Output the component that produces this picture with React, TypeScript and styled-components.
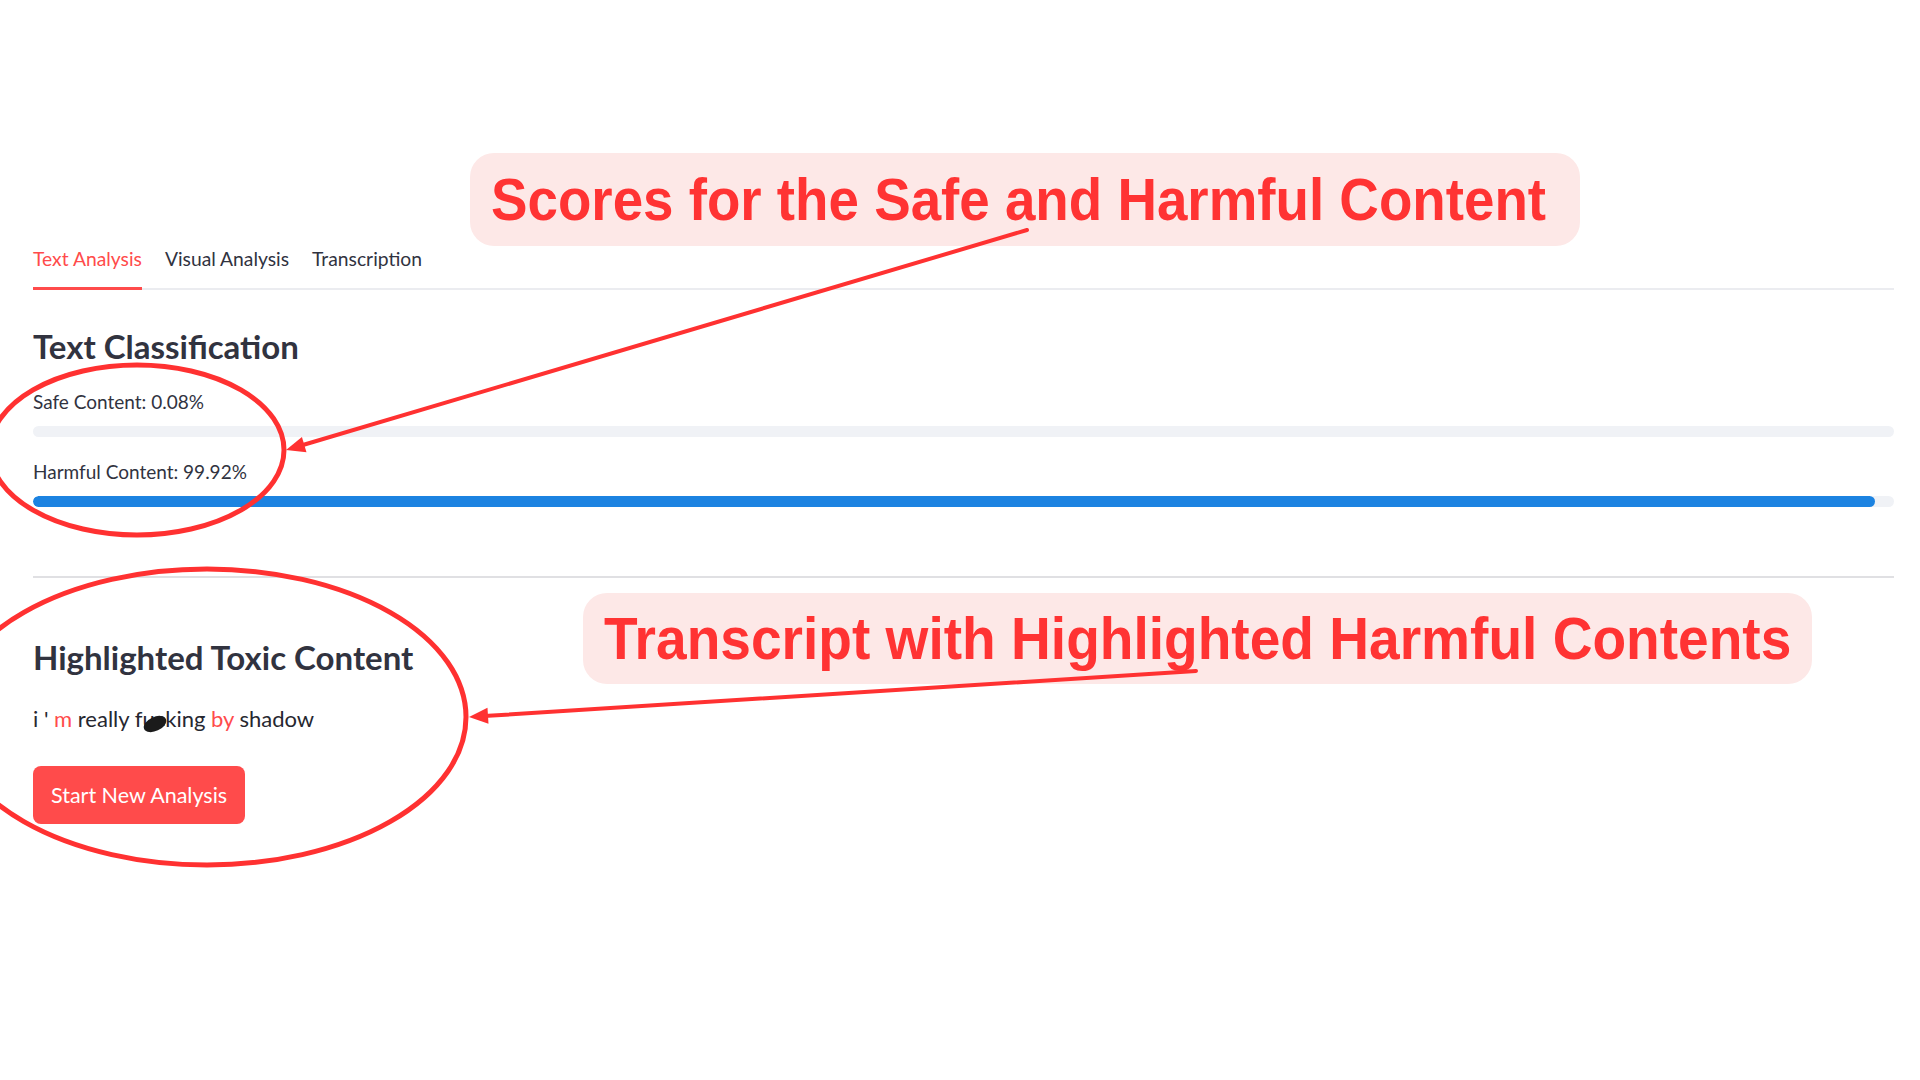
import React from "react";
import styled, { createGlobalStyle } from "styled-components";

const GlobalStyle = createGlobalStyle`
  html, body { margin: 0; padding: 0; background: #ffffff; }
  body {
    font-family: Lato, "Liberation Sans", sans-serif;
    color: #31333f;
  }
  * { box-sizing: border-box; }
`;

const Page = styled.div`
  position: relative;
  width: 1920px;
  height: 1080px;
  overflow: hidden;
  background: #ffffff;
`;

const Main = styled.main`
  display: flex;
  flex-direction: column;
  align-items: stretch;
  padding: 246px 26px 0 33px;
`;

const TabList = styled.div`
  display: flex;
  gap: 23px;
  border-bottom: 2px solid #ebecf0;
`;

const Tab = styled.div<{ $active?: boolean }>`
  font-size: 19.3px;
  line-height: 24px;
  padding-top: 1px;
  padding-bottom: 16px;
  margin-bottom: -2px;
  border-bottom: 3px solid ${(p) => (p.$active ? "#ff4b4b" : "transparent")};
  color: ${(p) => (p.$active ? "#ff4b4b" : "#31333f")};
  white-space: nowrap;
`;

const Heading = styled.h3<{ $gap: number }>`
  margin: ${(p) => p.$gap}px 0 0;
  font-size: 33px;
  line-height: 40px;
  font-weight: 700;
  color: #31333f;
`;

const Label = styled.div<{ $gap: number }>`
  margin-top: ${(p) => p.$gap}px;
  font-size: 19px;
  line-height: 24px;
  color: #31333f;
`;

const Track = styled.div`
  margin-top: 12px;
  height: 11px;
  border-radius: 6px;
  background: #f0f2f6;
  overflow: hidden;
`;

const Fill = styled.div`
  height: 100%;
  border-radius: 6px;
  background: #1c83e1;
`;

const Divider = styled.hr`
  margin: 69px 0 0;
  border: none;
  height: 2px;
  background: #e0e0e3;
`;

const Transcript = styled.p`
  margin: 27px 0 0;
  font-size: 22px;
  line-height: 30px;
  color: #262730;
`;

const Toxic = styled.span`
  color: #ff4b4b;
`;

const Censored = styled.span`
  position: relative;
  &::after {
    content: "";
    position: absolute;
    left: 1px;
    top: 12px;
    width: 24px;
    height: 14px;
    border-radius: 50%;
    background: #1b1b1b;
    transform: rotate(-25deg);
  }
`;

const PrimaryButton = styled.button`
  align-self: flex-start;
  margin-top: 32px;
  height: 58px;
  padding: 0 18px;
  border: none;
  border-radius: 8px;
  background: #ff4b4b;
  color: #ffffff;
  font-family: Lato, "Liberation Sans", sans-serif;
  font-size: 21.5px;
  cursor: pointer;
`;

const Callout = styled.div<{ $left: number; $top: number; $width: number; $height: number }>`
  position: absolute;
  left: ${(p) => p.$left}px;
  top: ${(p) => p.$top}px;
  width: ${(p) => p.$width}px;
  height: ${(p) => p.$height}px;
  display: flex;
  align-items: center;
  padding-left: 21px;
  border-radius: 24px;
  background: #fde8e7;
  color: #ff3333;
  font-family: "Liberation Sans", Arial, sans-serif;
  font-weight: 700;
  font-size: 60px;
  white-space: nowrap;
`;

const CalloutText = styled.span<{ $squeeze: number }>`
  display: inline-block;
  transform: scaleX(${(p) => p.$squeeze});
  transform-origin: left center;
`;

const Overlay = styled.svg`
  position: absolute;
  left: 0;
  top: 0;
  width: 1920px;
  height: 1080px;
  pointer-events: none;
`;

type Pt = [number, number];

function Arrow({ from, to }: { from: Pt; to: Pt }) {
  const dx = to[0] - from[0];
  const dy = to[1] - from[1];
  const len = Math.hypot(dx, dy);
  const ux = dx / len;
  const uy = dy / len;
  const headLen = 19;
  const half = 8;
  const bx = to[0] - ux * headLen;
  const by = to[1] - uy * headLen;
  const px = -uy * half;
  const py = ux * half;
  const pts = `${to[0]},${to[1]} ${bx + px},${by + py} ${bx - px},${by - py}`;
  return (
    <g>
      <line x1={from[0]} y1={from[1]} x2={bx + ux * 4} y2={by + uy * 4} stroke="#ff3131" strokeWidth={4} strokeLinecap="round" />
      <polygon points={pts} fill="#ff3131" />
    </g>
  );
}

const scores = { safe: 0.08, harmful: 99.92 };

export default function App() {
  return (
    <Page>
      <GlobalStyle />
      <Main>
        <TabList>
          <Tab $active>Text Analysis</Tab>
          <Tab>Visual Analysis</Tab>
          <Tab>Transcription</Tab>
        </TabList>

        <Heading $gap={36}>Text Classification</Heading>
        <Label $gap={24}>Safe Content: {scores.safe.toFixed(2)}%</Label>
        <Track>
          <Fill style={{ width: `${Math.floor(scores.safe)}%` }} />
        </Track>
        <Label $gap={23}>Harmful Content: {scores.harmful.toFixed(2)}%</Label>
        <Track>
          <Fill style={{ width: `${Math.floor(scores.harmful)}%` }} />
        </Track>

        <Divider />

        <Heading $gap={59}>Highlighted Toxic Content</Heading>
        <Transcript>
          i ' <Toxic>m</Toxic> really f<Censored>uc</Censored>king <Toxic>by</Toxic> shadow
        </Transcript>
        <PrimaryButton>Start New Analysis</PrimaryButton>
      </Main>

      <Callout $left={470} $top={153} $width={1110} $height={93}>
        <CalloutText $squeeze={0.912}>Scores for the Safe and Harmful Content</CalloutText>
      </Callout>
      <Callout $left={583} $top={593} $width={1229} $height={91}>
        <CalloutText $squeeze={0.918}>Transcript with Highlighted Harmful Contents</CalloutText>
      </Callout>

      <Overlay viewBox="0 0 1920 1080">
        <ellipse cx={137} cy={450} rx={147} ry={85} fill="none" stroke="#ff3131" strokeWidth={5} />
        <ellipse cx={207} cy={717} rx={259} ry={148} fill="none" stroke="#ff3131" strokeWidth={5} />
        <Arrow from={[1027, 230]} to={[286, 450]} />
        <Arrow from={[1196, 671]} to={[469, 717]} />
      </Overlay>
    </Page>
  );
}
